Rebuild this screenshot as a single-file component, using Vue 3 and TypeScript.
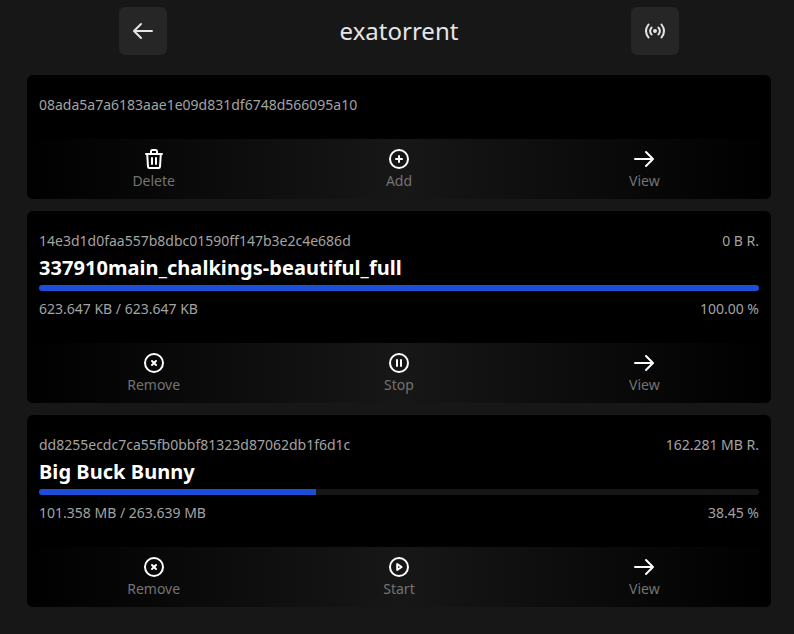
<script setup lang="ts">
type IconName = 'delete' | 'add' | 'view' | 'remove' | 'stop' | 'start'

interface Action {
  icon: IconName
  label: string
}

interface Torrent {
  hash: string
  name?: string
  remaining?: string
  progress?: string
  percent?: number
  actions: Action[]
}

const view: Action = { icon: 'view', label: 'View' }
const remove: Action = { icon: 'remove', label: 'Remove' }

const torrents: Torrent[] = [
  {
    hash: '08ada5a7a6183aae1e09d831df6748d566095a10',
    actions: [{ icon: 'delete', label: 'Delete' }, { icon: 'add', label: 'Add' }, view],
  },
  {
    hash: '14e3d1d0faa557b8dbc01590ff147b3e2c4e686d',
    name: '337910main_chalkings-beautiful_full',
    remaining: '0 B R.',
    progress: '623.647 KB / 623.647 KB',
    percent: 100,
    actions: [remove, { icon: 'stop', label: 'Stop' }, view],
  },
  {
    hash: 'dd8255ecdc7ca55fb0bbf81323d87062db1f6d1c',
    name: 'Big Buck Bunny',
    remaining: '162.281 MB R.',
    progress: '101.358 MB / 263.639 MB',
    percent: 38.45,
    actions: [remove, { icon: 'start', label: 'Start' }, view],
  },
]

const ring = 'M12 3a9 9 0 1 1 0 18a9 9 0 1 1 0-18z'

const paths: Record<IconName, string> = {
  delete: 'M4 7H20M9 6.6V4.5Q9 3 10 3H14Q15 3 15 4.5V6.6M5.2 7L6 19.7Q6.1 21 7.4 21H16.6Q17.9 21 18 19.7L18.8 7M10 10.9V16.9M14 10.9V16.9',
  add: ring + 'M12 9V15M9 12H15',
  view: 'M3 12H20.6M14 5L21 12L14 19',
  remove: ring + 'M10 10L14 14M14 10L10 14',
  stop: ring + 'M10 9V15M14 9V15',
  start: ring + 'M10.2 9L14.6 12L10.2 15Z',
}
</script>

<template>
  <div class="page">
    <header class="top">
      <button class="square" aria-label="Back">
        <svg class="icon" viewBox="0 0 24 24"><path d="M21 12H3.4M10 5L3 12L10 19" /></svg>
      </button>
      <h1>exatorrent</h1>
      <button class="square" aria-label="Status">
        <svg class="icon" viewBox="0 0 24 24">
          <circle class="dot" cx="12" cy="12" r="2" />
          <path d="M8.5 8.6Q5.7 12 8.5 15.4M15.5 8.6Q18.3 12 15.5 15.4M5.5 5.5Q0.5 12 5.5 18.5M18.5 5.5Q23.5 12 18.5 18.5" />
        </svg>
      </button>
    </header>
    <main class="list">
      <article v-for="t in torrents" :key="t.hash" class="card">
        <section class="info">
          <div class="row">
            <span>{{ t.hash }}</span>
            <span v-if="t.remaining">{{ t.remaining }}</span>
          </div>
          <template v-if="t.name && t.percent !== undefined">
            <h2>{{ t.name }}</h2>
            <div class="track"><div class="fill" :style="{ width: t.percent + '%' }"></div></div>
            <div class="row stats">
              <span>{{ t.progress }}</span>
              <span>{{ t.percent.toFixed(2) }} %</span>
            </div>
          </template>
        </section>
        <footer class="actions">
          <button v-for="a in t.actions" :key="a.label" class="action">
            <svg class="icon" viewBox="0 0 24 24"><path :d="paths[a.icon]" /></svg>
            <span>{{ a.label }}</span>
          </button>
        </footer>
      </article>
    </main>
  </div>
</template>

<style>
body {
  background: #171717;
}
</style>

<style scoped>
.page {
  box-sizing: border-box;
  height: 634px;
  padding: 7px 23px 0 27px;
  background: #171717;
  font-family: "Noto Sans", sans-serif;
  color: #a3a3a3;
}
.top {
  display: flex;
  justify-content: space-between;
  align-items: center;
  width: 560px;
  height: 48px;
  margin: 0 auto;
}
h1 {
  margin: 0;
  font-size: 24px;
  line-height: 32px;
  font-weight: 400;
  color: #e5e5e5;
}
button {
  border: 0;
  padding: 0;
  background: none;
  font-family: inherit;
}
.square {
  display: flex;
  align-items: center;
  justify-content: center;
  width: 48px;
  height: 48px;
  border-radius: 6px;
  background: #262626;
  color: #e5e5e5;
}
.icon {
  display: block;
  width: 24px;
  height: 24px;
  fill: none;
  stroke: currentColor;
  stroke-width: 2;
  stroke-linecap: round;
  stroke-linejoin: round;
}
.dot {
  fill: currentColor;
  stroke: none;
}
.list {
  display: flex;
  flex-direction: column;
  gap: 12px;
  margin-top: 20px;
}
.card {
  border-radius: 6px;
  background: #000;
  overflow: hidden;
}
.info {
  padding: 20px 12px 24px;
}
.row {
  display: flex;
  justify-content: space-between;
  font-size: 14px;
  line-height: 20px;
}
h2 {
  margin: 3px 0;
  font-size: 20px;
  line-height: 28px;
  font-weight: 700;
  letter-spacing: 0.055px;
  color: #fff;
}
.track {
  height: 6px;
  border-radius: 3px;
  background: #171717;
  overflow: hidden;
}
.fill {
  height: 100%;
  background: #1d4ed8;
}
.stats {
  margin-top: 8px;
}
.actions {
  display: grid;
  grid-template-columns: repeat(3, 1fr);
  height: 60px;
  box-sizing: border-box;
  padding: 8px 4px 0;
  background: linear-gradient(to right, #000, #171717, #000);
}
.action {
  display: flex;
  flex-direction: column;
  align-items: center;
  font-size: 14px;
  line-height: 20px;
  color: #fff;
}
.action span {
  color: #737373;
}
</style>
